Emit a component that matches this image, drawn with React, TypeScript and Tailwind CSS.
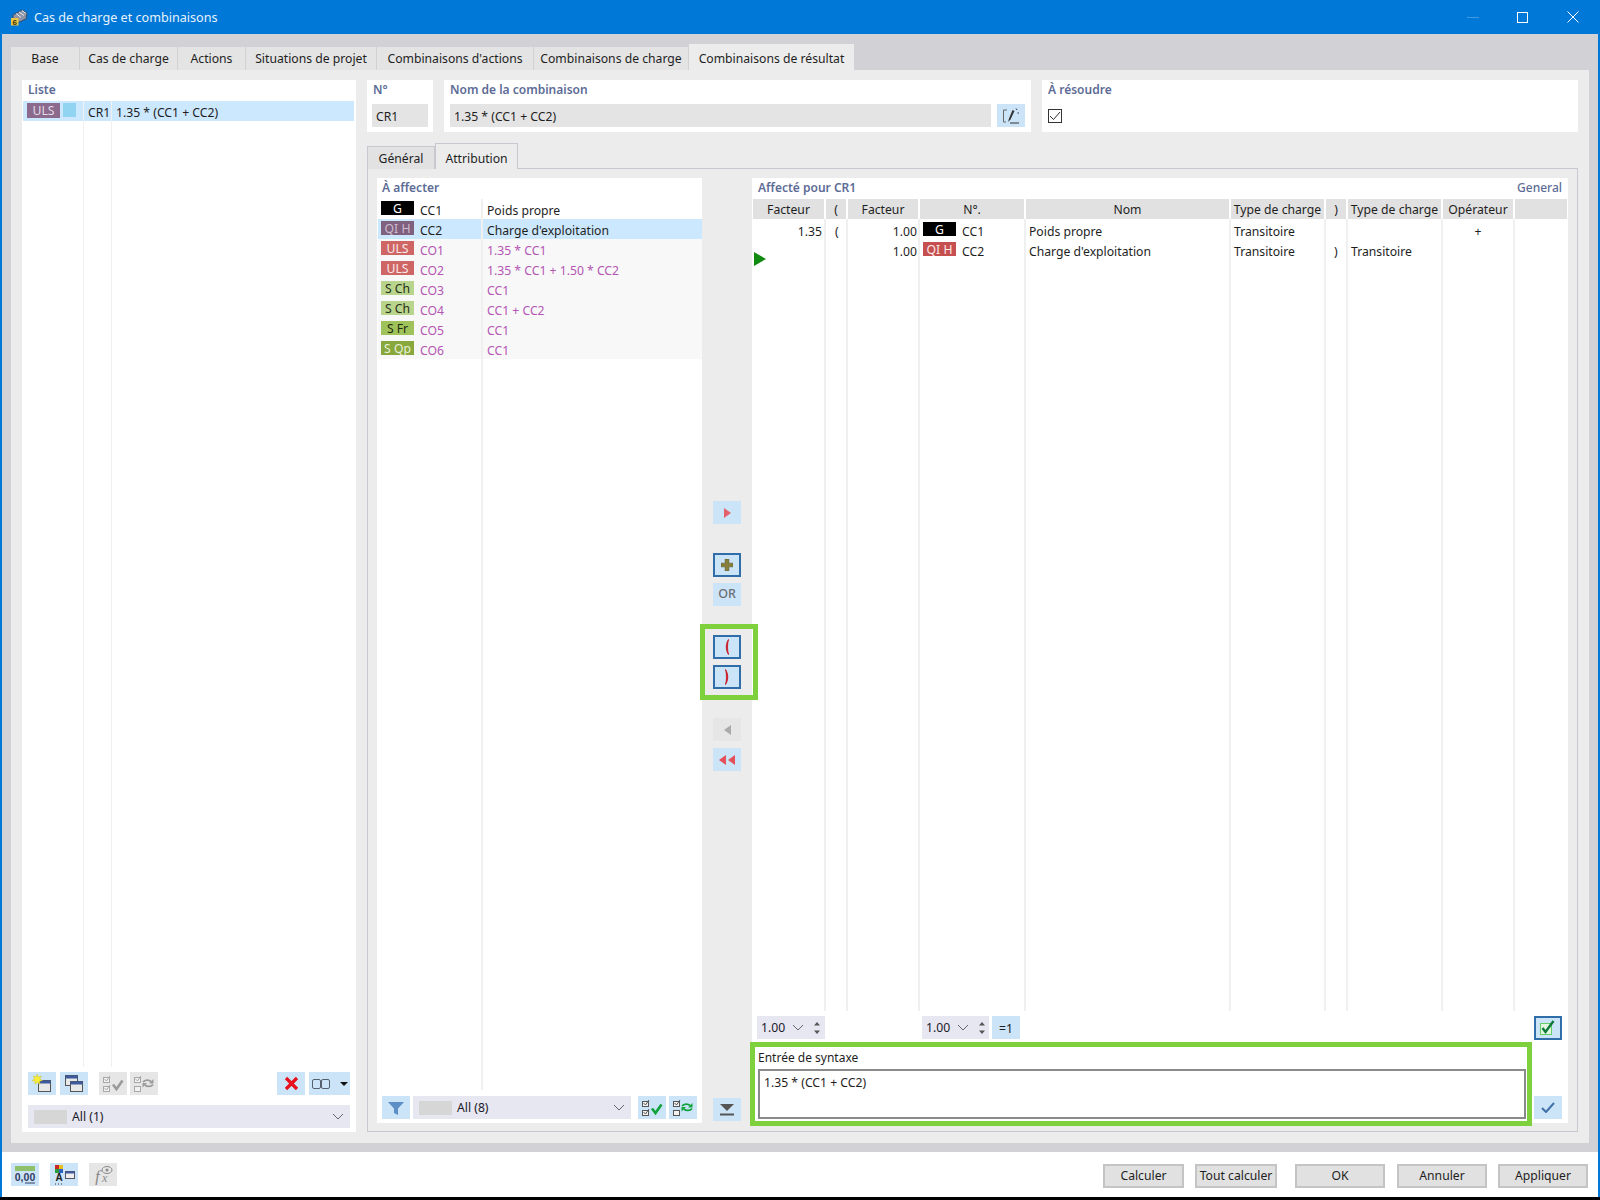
import type { ReactNode } from "react";

const tabs = [
  { label: "Base", w: "w-[68px]" },
  { label: "Cas de charge", w: "w-[97px]" },
  { label: "Actions", w: "w-[67px]" },
  { label: "Situations de projet", w: "w-[130px]" },
  { label: "Combinaisons d'actions", w: "w-[156px]" },
  { label: "Combinaisons de charge", w: "w-[154px]" },
];

const listRows = [
  { badge: "G", badgeClass: "bg-black text-white", no: "CC1", name: "Poids propre", dark: true },
  { badge: "QI H", badgeClass: "bg-[#80607f] text-[#cdbccd]", no: "CC2", name: "Charge d'exploitation", dark: true, selected: true },
  { badge: "ULS", badgeClass: "bg-[#cf6666] text-[#fbeaea]", no: "CO1", name: "1.35 * CC1" },
  { badge: "ULS", badgeClass: "bg-[#cf6666] text-[#fbeaea]", no: "CO2", name: "1.35 * CC1 + 1.50 * CC2" },
  { badge: "S Ch", badgeClass: "bg-[#b9d48c] text-[#26301a]", no: "CO3", name: "CC1" },
  { badge: "S Ch", badgeClass: "bg-[#b9d48c] text-[#26301a]", no: "CO4", name: "CC1 + CC2" },
  { badge: "S Fr", badgeClass: "bg-[#9fc25a] text-[#1f2a10]", no: "CO5", name: "CC1" },
  { badge: "S Qp", badgeClass: "bg-[#88a83e] text-[#e8f0d8]", no: "CO6", name: "CC1" },
];

const gridCols = "grid grid-cols-[73px_22px_72px_106px_205px_95px_22px_95px_72px_54px]";
const cellLine = "border-r-2 border-[#f0f0f0]";

function IconBtn({ children, kind = "normal", wide }: { children?: ReactNode; kind?: "normal" | "off" | "pressed"; wide?: boolean }) {
  const tone =
    kind === "off"
      ? "h-[23px] bg-[#e6e6e6]"
      : kind === "pressed"
        ? "h-[24px] bg-[#cce4f7] border-2 border-[#2f6ea8]"
        : "h-[23px] bg-[#cce4f7]";
  return <div className={`${wide ? "w-[41px]" : "w-[28px]"} shrink-0 flex items-center justify-center ${tone}`}>{children}</div>;
}

function Chevron() {
  return (
    <svg width="12" height="7" viewBox="0 0 12 7" className="shrink-0">
      <path d="M1 1l5 5 5-5" fill="none" stroke="#666" strokeWidth="1" />
    </svg>
  );
}

function Combo({ label, className }: { label: string; className: string }) {
  return (
    <div className={`h-[23px] bg-[#e7e7f1] flex items-center pl-[6px] pr-[6px] ${className}`}>
      <div className="w-[33px] h-[14px] bg-[#d6d6d6]" />
      <span className="ml-[5px] mt-[2px] text-[#1a1a2a]">{label}</span>
      <div className="flex-1" />
      <Chevron />
    </div>
  );
}

function Spinner({ className }: { className: string }) {
  return (
    <div className={`h-[23px] bg-[#e7e7f1] flex items-center pl-[4px] ${className}`}>
      <span className="text-[#1a1a2a] mt-[2px]">1.00</span>
      <div className="ml-[7px]">
        <Chevron />
      </div>
      <svg width="8" height="14" viewBox="0 0 8 14" className="ml-[9px]">
        <path d="M4 1l3 3.5H1zM4 13L1 9.500h6z" fill="#555" />
      </svg>
    </div>
  );
}

function Badge({ text, className }: { text: string; className: string }) {
  return <div className={`w-[33px] h-[14px] leading-[15px] text-center shrink-0 mt-[2px] ${className}`}>{text}</div>;
}

function NewIcon() {
  return (
    <svg width="20" height="20" viewBox="0 0 20 20">
      <rect x="6.500" y="6.500" width="12" height="11" fill="#e8e8e8" stroke="#555" />
      <rect x="6.500" y="6.500" width="12" height="3" fill="#3d5a9e" />
      <path d="M5 0l1.300 3 3-1-1.400 3 2.600 1.500-3 .8.500 3-2.600-1.800-2.600 1.800.5-3L0 6.500 2.600 5 1.200 2l3 1z" fill="#f7ee3a" stroke="#c9b820" strokeWidth=".4" />
    </svg>
  );
}

function CopyIcon() {
  return (
    <svg width="20" height="20" viewBox="0 0 20 20">
      <rect x="1.500" y="1.500" width="12" height="10" fill="#e8e8e8" stroke="#555" />
      <rect x="1.500" y="1.500" width="12" height="3" fill="#3d5a9e" />
      <rect x="6.500" y="7.500" width="12" height="10" fill="#e8e8e8" stroke="#555" />
      <rect x="6.500" y="7.500" width="12" height="3" fill="#3d5a9e" />
    </svg>
  );
}

function CheckAllIcon({ active }: { active?: boolean }) {
  const box = active ? "#555" : "#a8a8a8";
  const tick = active ? "#10a33c" : "#9a9a9a";
  return (
    <svg width="22" height="20" viewBox="0 0 22 20">
      <rect x="1.500" y="3.500" width="6" height="5" fill="#f2f2f2" stroke={box} />
      <rect x="1.500" y="12.500" width="6" height="5" fill="#f2f2f2" stroke={box} />
      <path d="M2.500 5l2 2 3.500-5M2.500 14l2 2 3.500-5" fill="none" stroke={box} strokeWidth="1" />
      <path d="M11 10.500l3.500 4.500 6-8.500" fill="none" stroke={tick} strokeWidth="2.600" />
    </svg>
  );
}

function SwapIcon({ active }: { active?: boolean }) {
  const box = active ? "#555" : "#a8a8a8";
  const arrow = active ? "#10a33c" : "#9a9a9a";
  return (
    <svg width="22" height="20" viewBox="0 0 22 20">
      <rect x="1.500" y="3.500" width="6" height="5" fill="#f2f2f2" stroke={box} />
      <rect x="1.500" y="12.500" width="6" height="5" fill="#f2f2f2" stroke={box} />
      <path d="M2.500 5l2 2 3.500-5" fill="none" stroke={box} />
      <path d="M10 8c2-2.500 6-2.500 8-.5M20 10.500c-2 2.500-6 2.500-8 .5" fill="none" stroke={arrow} strokeWidth="1.800" />
      <path d="M20.500 5v4.500h-4.500zM9.500 13.500V9H14z" fill={arrow} />
    </svg>
  );
}

function Triangle({ dir, color }: { dir: "left" | "right"; color: string }) {
  return (
    <svg width="9" height="10" viewBox="0 0 9 10">
      <path d={dir === "right" ? "M1 0l7 5-7 5z" : "M8 0L1 5l7 5z"} fill={color} />
    </svg>
  );
}

function Paren({ open }: { open?: boolean }) {
  return (
    <svg width="8" height="16" viewBox="0 0 8 16">
      <path d={open ? "M5.500 .5C2.500 5 2.500 11 5.500 15.500C4.200 11 4.200 5 5.500 .5z" : "M2.500 .5C5.500 5 5.500 11 2.500 15.500C3.800 11 3.800 5 2.500 .5z"} fill="#c8141e" stroke="#c8141e" strokeWidth=".8" />
    </svg>
  );
}

export default function App() {
  return (
    <div className="w-[1600px] h-[1200px] flex flex-col bg-white text-[12.2px] text-[#1e1e1e] font-['Noto_Sans','Open_Sans',sans-serif] overflow-hidden">
      {/* title bar */}
      <div className="h-[34px] shrink-0 bg-[#0078d7] flex items-center pl-[11px] text-white">
        <svg width="17" height="18" viewBox="0 0 17 18" className="shrink-0">
          <path d="M2 7l9-5 5 3-1 6-9 4-4-3z" fill="#8d95a6" stroke="#39414f" strokeWidth=".8" />
          <path d="M5 5.500l5 4M8 4l5 3.500M11 2.500l4 3" stroke="#e6e9ef" strokeWidth="1" />
          <rect x="0" y="10" width="7.500" height="7.500" fill="#e9c54a" />
          <text x="1.400" y="16.800" fontSize="8" fontWeight="700" fill="#3a3000" fontFamily="'Liberation Sans', sans-serif">6</text>
        </svg>
        <span className="ml-[6px] mt-[2px] text-[12.6px] text-[#e8f2fb]">Cas de charge et combinaisons</span>
        <div className="flex-1" />
        <div className="w-[12px] h-px bg-[#3f98e0] mr-[38px]" />
        <div className="w-[11px] h-[11px] border border-white mr-[39px]" />
        <svg width="12" height="12" viewBox="0 0 12 12" className="mr-[21px]">
          <path d="M.5.500l11 11M11.500.500l-11 11" stroke="white" strokeWidth="1" />
        </svg>
      </div>

      <div className="flex-1 flex flex-col border-x-2 border-[#0078d7] min-h-0">
        {/* gray dialog body */}
        <div className="h-[1118px] shrink-0 bg-[#d2d2d6] px-[9px] pb-[9px] flex flex-col">
          <div className="h-[36px] shrink-0 flex items-end">
            {tabs.map((t) => (
              <div key={t.label} className={`${t.w} h-[23px] pt-[2px] mr-px bg-[#e4e4e4] flex items-center justify-center whitespace-nowrap`}>
                {t.label}
              </div>
            ))}
            <div className="w-[165px] h-[26px] pt-[5px] bg-[#ececec] flex items-center justify-center whitespace-nowrap">Combinaisons de résultat</div>
          </div>

          <div className="flex-1 min-h-0 bg-[#ececec] pl-[11px] pr-[11px] pt-[10px] pb-[11px] flex gap-[11px]">
            {/* left list */}
            <div className="w-[334px] shrink-0 bg-white flex flex-col px-px">
              <div className="h-[21px] shrink-0 pl-[5px] leading-[20px] text-[12px] font-semibold text-[#5d6c96]">Liste</div>
              <div className="h-[20px] shrink-0 flex bg-[#cce8ff] mr-px">
                <div className="w-[61px] shrink-0 flex pl-[4px] gap-[3px] border-r border-[#f0f0f0]">
                  <div className="w-[33px] h-[15px] mt-[2px] bg-[#8b6a8e] text-[#e4dae4] text-center leading-[16px]">ULS</div>
                  <div className="w-[13px] h-[14px] mt-[2px] bg-[#90d4f2]" />
                </div>
                <div className="w-[28px] shrink-0 pl-[4px] leading-[23px] border-r border-[#f0f0f0]">CR1</div>
                <div className="pl-[4px] leading-[23px]">1.35 * (CC1 + CC2)</div>
              </div>
              <div className="flex-1 min-h-0 flex">
                <div className="w-[61px] shrink-0 border-r border-[#f0f0f0]" />
                <div className="w-[28px] shrink-0 border-r border-[#f0f0f0]" />
              </div>
              <div className="flex items-center px-[5px] mt-[5px] shrink-0">
                <IconBtn><NewIcon /></IconBtn>
                <div className="w-[4px]" />
                <IconBtn><CopyIcon /></IconBtn>
                <div className="w-[11px]" />
                <IconBtn kind="off"><CheckAllIcon /></IconBtn>
                <div className="w-[3px]" />
                <IconBtn kind="off"><SwapIcon /></IconBtn>
                <div className="flex-1" />
                <IconBtn>
                  <svg width="15" height="15" viewBox="0 0 15 15">
                    <path d="M2 2l11 11M13 2L2 13" stroke="#e8101c" strokeWidth="3.200" />
                  </svg>
                </IconBtn>
                <div className="w-[4px]" />
                <IconBtn wide>
                  <svg width="36" height="12" viewBox="0 0 36 12">
                    <rect x=".5" y="1.500" width="8" height="9" rx="1.500" fill="none" stroke="#55606e" />
                    <rect x="9.500" y="1.500" width="8" height="9" rx="1.500" fill="none" stroke="#55606e" />
                    <path d="M28 4h8l-4 4z" fill="#111" />
                  </svg>
                </IconBtn>
              </div>
              <Combo label="All (1)" className="mx-[5px] mt-[10px] mb-[4px] shrink-0" />
            </div>

            {/* right column */}
            <div className="flex-1 min-w-0 flex flex-col">
              <div className="h-[52px] shrink-0 flex gap-[11px]">
                <div className="w-[66px] bg-white px-[5px] flex flex-col">
                  <div className="h-[24px] leading-[20px] pl-px text-[12px] font-semibold text-[#5d6c96]">N°</div>
                  <div className="h-[23px] bg-[#e4e4e4] pl-[4px] leading-[25px]">CR1</div>
                </div>
                <div className="w-[587px] bg-white pl-[6px] pr-[6px] flex flex-col">
                  <div className="h-[24px] leading-[20px] text-[12px] font-semibold text-[#5d6c96]">Nom de la combinaison</div>
                  <div className="flex gap-[6px]">
                    <div className="flex-1 h-[23px] bg-[#e4e4e4] pl-[4px] leading-[25px]">1.35 * (CC1 + CC2)</div>
                    <IconBtn>
                      <svg width="20" height="18" viewBox="0 0 20 18">
                        <path d="M6 3H2.500v12H5" fill="none" stroke="#666" />
                        <path d="M11.500 3L8 11.500 7 15l2.500-2.500L13.500 4z" fill="#333" />
                        <path d="M15 1.500l1 1.500M16.500 6h1.500" stroke="#333" />
                        <path d="M9 16h9" stroke="#333" />
                      </svg>
                    </IconBtn>
                  </div>
                </div>
                <div className="flex-1 bg-white pl-[6px] flex flex-col">
                  <div className="h-[29px] leading-[20px] text-[12px] font-semibold text-[#5d6c96]">À résoudre</div>
                  <div className="w-[14px] h-[14px] border border-[#333] flex items-center justify-center">
                    <svg width="12" height="10" viewBox="0 0 12 10">
                      <path d="M1 5l3.500 3.500L11 1" fill="none" stroke="#333" strokeWidth="1" />
                    </svg>
                  </div>
                </div>
              </div>

              <div className="h-[26px] mt-[11px] shrink-0 flex items-end relative z-10">
                <div className="w-[68px] h-[23px] pt-[2px] bg-[#e2e2e2] border border-b-0 border-[#c8c8d0] flex items-center justify-center">Général</div>
                <div className="w-[83px] h-[26px] pt-[5px] bg-[#ececec] border border-b-0 border-[#c8c8d0] flex items-center justify-center">Attribution</div>
              </div>

              {/* bordered tab page */}
              <div className="flex-1 min-h-0 -mt-px border border-[#c8c8d0] pl-[9px] pr-[9px] pt-[9px] pb-[8px] flex">
                {/* available items */}
                <div className="w-[325px] shrink-0 bg-white flex flex-col">
                  <div className="h-[21px] shrink-0 pl-[5px] leading-[20px] text-[12px] font-semibold text-[#5d6c96]">À affecter</div>
                  {listRows.map((r) => (
                    <div key={r.no} className={`h-[20px] shrink-0 flex ml-px ${r.selected ? "bg-[#cce8ff]" : r.dark ? "" : "bg-[#f8f8f8]"} ${r.dark ? "" : "text-[#b455b4]"}`}>
                      <div className="w-[105px] shrink-0 flex pl-[3px] border-r-2 border-[#f0f0f0]">
                        <Badge text={r.badge} className={r.badgeClass} />
                        <span className="ml-[6px] leading-[23px]">{r.no}</span>
                      </div>
                      <span className="pl-[4px] leading-[23px] whitespace-nowrap">{r.name}</span>
                    </div>
                  ))}
                  <div className="flex-1 min-h-0 flex ml-px">
                    <div className="w-[105px] border-r-2 border-[#f0f0f0]" />
                  </div>
                  <div className="flex items-center pl-[5px] pr-[5px] mt-[6px] mb-[4px] shrink-0">
                    <IconBtn>
                      <svg width="16" height="14" viewBox="0 0 16 14">
                        <path d="M0 1h16L10 7.500V14L6 12V7.500z" fill="#5b8fc6" />
                      </svg>
                    </IconBtn>
                    <Combo label="All (8)" className="w-[218px] ml-[3px]" />
                    <div className="w-[7px]" />
                    <IconBtn><CheckAllIcon active /></IconBtn>
                    <div className="w-[3px]" />
                    <IconBtn><SwapIcon active /></IconBtn>
                  </div>
                </div>

                {/* transfer buttons */}
                <div className="w-[50px] shrink-0 flex flex-col items-center">
                  <div className="mt-[323px]"><IconBtn><Triangle dir="right" color="#e4606a" /></IconBtn></div>
                  <div className="mt-[29px]">
                    <IconBtn kind="pressed">
                      <svg width="12" height="12" viewBox="0 0 13 13">
                        <path d="M4.500 0h4v4.500H13v4H8.500V13h-4V8.500H0v-4h4.500z" fill="#86803a" stroke="#55511e" strokeWidth=".6" />
                      </svg>
                    </IconBtn>
                  </div>
                  <div className="mt-[6px]">
                    <IconBtn><span className="text-[#6b6f76] font-medium text-[12.5px]">OR</span></IconBtn>
                  </div>
                  {/* green highlight sits over the two parenthesis buttons */}
                  <div className="relative mt-[29px] flex flex-col gap-[6px]">
                    <IconBtn kind="pressed"><Paren open /></IconBtn>
                    <IconBtn kind="pressed"><Paren /></IconBtn>
                    <div className="absolute -left-[13px] -right-[17px] -top-[11px] -bottom-[11px] border-[5px] border-[#7ed03c]" />
                  </div>
                  <div className="mt-[29px]"><IconBtn kind="off"><Triangle dir="left" color="#aaaaaa" /></IconBtn></div>
                  <div className="mt-[7px]">
                    <IconBtn>
                      <div className="flex">
                        <Triangle dir="left" color="#e4505a" />
                        <Triangle dir="left" color="#e4505a" />
                      </div>
                    </IconBtn>
                  </div>
                  <div className="flex-1" />
                  <div className="mb-[2px]">
                    <IconBtn>
                      <svg width="16" height="12" viewBox="0 0 16 12">
                        <path d="M1 0h14L8 7z" fill="#555" />
                        <path d="M1 10.500h14" stroke="#555" strokeWidth="2" />
                      </svg>
                    </IconBtn>
                  </div>
                </div>

                {/* assigned table */}
                <div className="flex-1 min-w-0 bg-white flex flex-col pl-px">
                  <div className="h-[21px] shrink-0 flex justify-between pl-[5px] pr-[6px] leading-[20px] text-[12px] font-semibold text-[#5d6c96]">
                    <span>Affecté pour CR1</span>
                    <span className="font-medium">General</span>
                  </div>
                  <div className={`${gridCols} h-[20px] shrink-0`}>
                    {["Facteur", "(", "Facteur", "N°.", "Nom", "Type de charge", ")", "Type de charge", "Opérateur", ""].map((h, i) => (
                      <div key={i} className="mr-[2px] bg-[#e1e1e1] text-center leading-[22px] whitespace-nowrap overflow-hidden">{h}</div>
                    ))}
                  </div>
                  <div className={`${gridCols} h-[22px] shrink-0 leading-[25px]`}>
                    <div className={`${cellLine} text-right pr-[2px]`}>1.35</div>
                    <div className={`${cellLine} pl-[9px]`}>(</div>
                    <div className={`${cellLine} text-right pr-px`}>1.00</div>
                    <div className={`${cellLine} flex pl-[3px]`}>
                      <div className="mt-[1px]"><Badge text="G" className="bg-black text-white" /></div>
                      <span className="ml-[6px]">CC1</span>
                    </div>
                    <div className={`${cellLine} pl-[3px]`}>Poids propre</div>
                    <div className={`${cellLine} pl-[3px]`}>Transitoire</div>
                    <div className={cellLine} />
                    <div className={cellLine} />
                    <div className={`${cellLine} text-center`}>+</div>
                    <div />
                  </div>
                  <div className={`${gridCols} h-[20px] shrink-0 leading-[22px]`}>
                    <div className={cellLine} />
                    <div className={cellLine} />
                    <div className={`${cellLine} text-right pr-px`}>1.00</div>
                    <div className={`${cellLine} flex pl-[3px]`}>
                      <div className="-mt-px"><Badge text="QI H" className="bg-[#c5504f] text-[#fde8e8]" /></div>
                      <span className="ml-[6px]">CC2</span>
                    </div>
                    <div className={`${cellLine} pl-[3px]`}>Charge d'exploitation</div>
                    <div className={`${cellLine} pl-[3px]`}>Transitoire</div>
                    <div className={`${cellLine} pl-[8px]`}>)</div>
                    <div className={`${cellLine} pl-[3px]`}>Transitoire</div>
                    <div className={cellLine} />
                    <div />
                  </div>
                  <div className={`${gridCols} flex-1 min-h-0 relative`}>
                    <div className={cellLine} />
                    <div className={cellLine} />
                    <div className={cellLine} />
                    <div className={cellLine} />
                    <div className={cellLine} />
                    <div className={cellLine} />
                    <div className={cellLine} />
                    <div className={cellLine} />
                    <div className={cellLine} />
                    <div />
                    <svg width="12" height="14" viewBox="0 0 12 14" className="absolute left-[1px] -top-[9px]">
                      <path d="M0 0l12 7-12 7z" fill="#108a10" />
                    </svg>
                  </div>

                  <div className="h-[23px] mt-[5px] shrink-0 flex">
                    <Spinner className="w-[68px] ml-[4px]" />
                    <Spinner className="w-[67px] ml-[97px]" />
                    <div className="ml-[3px]"><IconBtn><span className="mt-[3px]">=1</span></IconBtn></div>
                    <div className="flex-1" />
                    <div className="mr-[6px]">
                      <IconBtn kind="pressed">
                        <svg width="18" height="16" viewBox="0 0 18 16">
                          <rect x="1.500" y="3.500" width="11" height="11" fill="#e2f6e2" stroke="#66cc66" />
                          <path d="M3.500 8l3 4 8-11" fill="none" stroke="#0e7a3a" strokeWidth="2.400" />
                        </svg>
                      </IconBtn>
                    </div>
                  </div>

                  {/* syntax input, framed by the green highlight */}
                  <div className="mt-[9px] mb-[4px] shrink-0 flex">
                    <div className="relative w-[768px] ml-[5px] shrink-0">
                      <div className="h-[21px] leading-[20px] text-[12px]">Entrée de syntaxe</div>
                      <div className="h-[50px] border-2 border-[#8a8a8a] pl-[4px] pt-[2px] leading-[20px]">1.35 * (CC1 + CC2)</div>
                      <div className="absolute -left-[8px] -right-[6px] -top-[6px] -bottom-[7px] border-[5px] border-[#7ed03c]" />
                    </div>
                    <div className="flex-1" />
                    <div className="self-end mr-[6px]">
                      <IconBtn>
                        <svg width="14" height="11" viewBox="0 0 14 11">
                          <path d="M1 6l4 4 8-9" fill="none" stroke="#3f70a8" strokeWidth="2" />
                        </svg>
                      </IconBtn>
                    </div>
                  </div>
                </div>
              </div>
            </div>
          </div>
        </div>

        {/* footer */}
        <div className="flex-1 bg-white flex items-center pl-[9px] pr-[10px]">
          <IconBtn>
            <svg width="24" height="20" viewBox="0 0 24 20">
              <rect x="2" y="1" width="20" height="5" fill="#8fc06a" />
              <text x="12" y="16" textAnchor="middle" fontSize="10.500" fontWeight="700" fill="#333c66" fontFamily="'Liberation Sans', sans-serif">0,00</text>
              <path d="M12 18h10" stroke="#333c66" />
            </svg>
          </IconBtn>
          <div className="w-[11px]" />
          <IconBtn>
            <svg width="22" height="20" viewBox="0 0 22 20">
              <rect x="2" y="0" width="4" height="4" fill="#c8282a" />
              <rect x="6" y="0" width="4" height="4" fill="#e8c020" />
              <rect x="2" y="4" width="4" height="4" fill="#2a9a3a" />
              <rect x="6" y="4" width="4" height="4" fill="#3060c0" />
              <text x="6" y="16" textAnchor="middle" fontSize="10" fontWeight="700" fill="#222" fontFamily="'Liberation Sans', sans-serif">A</text>
              <rect x="12.500" y="6.500" width="9" height="7" fill="#eee" stroke="#556" />
              <rect x="12.500" y="6.500" width="9" height="2" fill="#3d5a9e" />
              <path d="M2 19h1M5 19h1M8 19h1" stroke="#333" />
            </svg>
          </IconBtn>
          <div className="w-[11px]" />
          <IconBtn kind="off">
            <svg width="22" height="20" viewBox="0 0 22 20">
              <text x="3" y="17" fontSize="17" fontStyle="italic" fill="#8a8a8a" fontFamily="'Liberation Serif', serif">f</text>
              <text x="10" y="17" fontSize="12" fontStyle="italic" fill="#8a8a8a" fontFamily="'Liberation Serif', serif">x</text>
              <ellipse cx="15" cy="5" rx="5" ry="3.500" fill="none" stroke="#8a8a8a" />
              <circle cx="15" cy="5" r="1.500" fill="#8a8a8a" />
            </svg>
          </IconBtn>
          <div className="flex-1" />
          <div className="w-[81px] h-[24px] mt-[3px] mr-[11px] bg-[#e1e1e1] border-2 border-[#c4c4c4] flex items-center justify-center whitespace-nowrap">Calculer</div>
          <div className="w-[82px] h-[24px] mt-[3px] mr-[18px] bg-[#e1e1e1] border-2 border-[#c4c4c4] flex items-center justify-center whitespace-nowrap">Tout calculer</div>
          <div className="w-[90px] h-[24px] mt-[3px] mr-[12px] bg-[#e1e1e1] border-2 border-[#c4c4c4] flex items-center justify-center whitespace-nowrap">OK</div>
          <div className="w-[90px] h-[24px] mt-[3px] mr-[11px] bg-[#e1e1e1] border-2 border-[#c4c4c4] flex items-center justify-center whitespace-nowrap">Annuler</div>
          <div className="w-[90px] h-[24px] mt-[3px] bg-[#e1e1e1] border-2 border-[#c4c4c4] flex items-center justify-center whitespace-nowrap">Appliquer</div>
        </div>
      </div>
      <div className="h-[3px] shrink-0 bg-black" />
    </div>
  );
}
